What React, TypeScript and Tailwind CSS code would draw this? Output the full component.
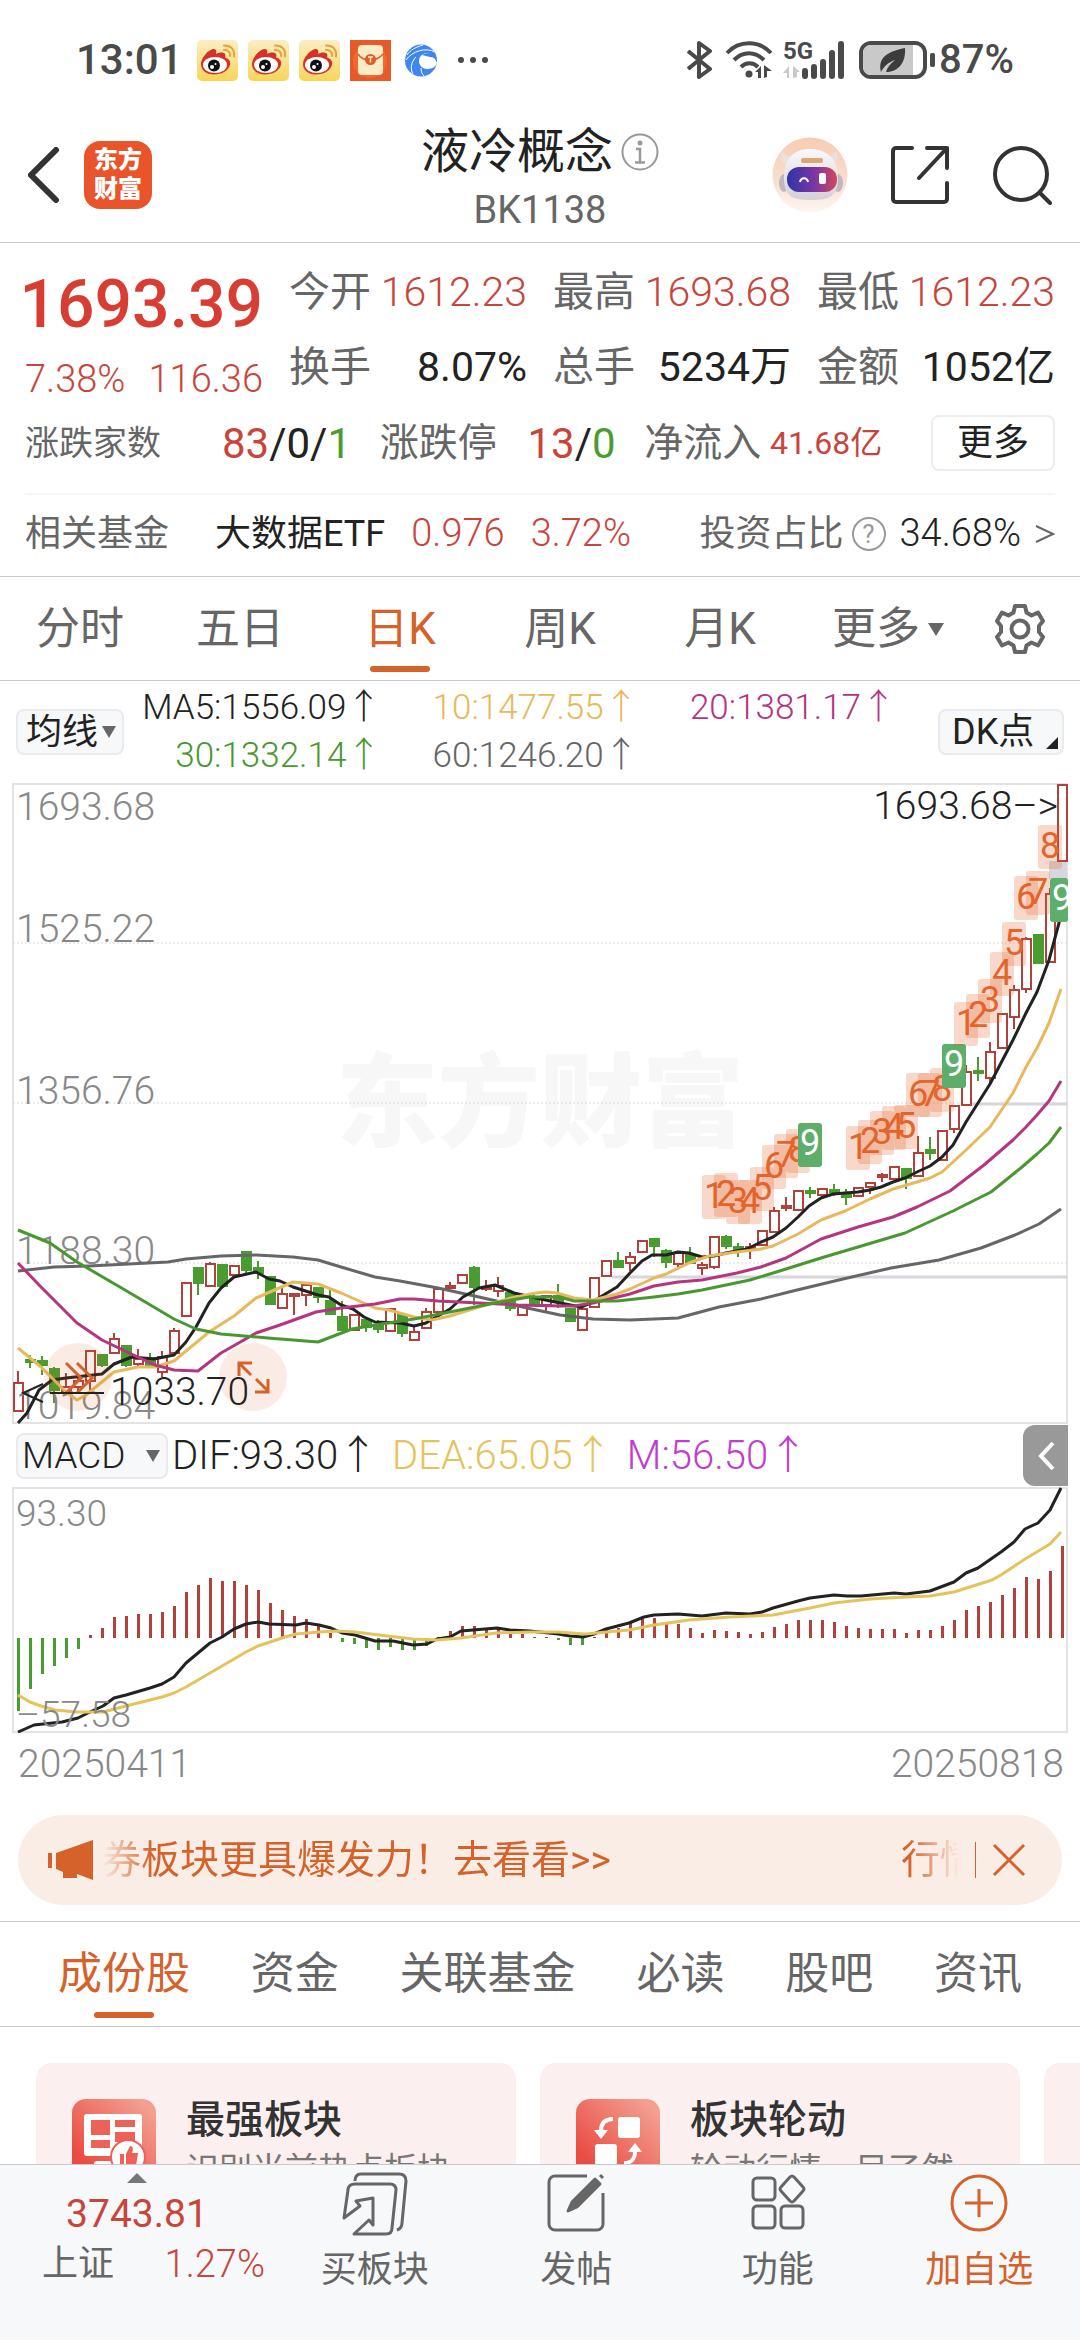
import React, { useState } from 'react';
import type { FC } from 'react';

interface Candle {
  up: boolean;
  high: number;
  top: number;
  bottom: number;
  low: number;
}

interface Marker {
  index: number;
  y: number;
  n: number;
}

const STEP = 12;
const candleX = (i: number) => 18 + i * STEP;

// [up, high, body top, body bottom, low], chart units measured from the top of the plot
const rawCandles: [number, number, number, number, number][] = [
  [1, 588, 600, 628, 628], [0, 572, 577, 579, 585], [0, 573, 578, 582, 592], [0, 584, 586, 607, 620],
  [1, 590, 604, 609, 612], [1, 594, 598, 604, 610], [1, 567, 568, 598, 609], [0, 571, 572, 582, 584],
  [1, 550, 556, 570, 570], [0, 562, 563, 582, 584], [1, 566, 576, 581, 585], [0, 570, 575, 584, 584],
  [1, 568, 574, 589, 594], [1, 545, 548, 570, 572], [1, 500, 500, 533, 533], [0, 484, 485, 500, 512],
  [1, 479, 481, 503, 504], [0, 481, 482, 503, 503], [1, 483, 483, 492, 494], [0, 468, 469, 487, 490],
  [0, 478, 485, 490, 496], [0, 494, 494, 521, 521], [1, 504, 511, 525, 525], [1, 511, 511, 512, 532],
  [1, 500, 502, 512, 523], [0, 505, 505, 514, 520], [0, 507, 518, 531, 531], [0, 518, 534, 547, 547],
  [1, 532, 532, 547, 547], [0, 534, 537, 544, 549], [0, 537, 543, 546, 550], [1, 526, 526, 548, 548],
  [0, 531, 532, 550, 554], [1, 544, 549, 557, 557], [1, 525, 529, 545, 545], [1, 504, 506, 529, 529],
  [1, 499, 503, 505, 506], [1, 492, 492, 500, 500], [0, 483, 485, 504, 522], [1, 497, 504, 506, 508],
  [1, 494, 503, 508, 514], [0, 509, 510, 525, 528], [1, 522, 522, 532, 532], [0, 512, 514, 521, 521],
  [1, 512, 513, 522, 528], [0, 501, 513, 519, 525], [0, 525, 526, 538, 539], [1, 524, 526, 547, 547],
  [1, 495, 495, 524, 524], [1, 478, 478, 493, 493], [0, 469, 478, 484, 484], [1, 469, 474, 480, 488],
  [1, 458, 458, 469, 469], [0, 455, 456, 463, 474], [0, 466, 468, 479, 485], [1, 468, 470, 481, 484],
  [0, 464, 472, 480, 480], [1, 479, 482, 485, 492], [1, 454, 454, 484, 486], [0, 452, 454, 463, 466],
  [0, 460, 464, 465, 474], [1, 460, 464, 466, 476], [1, 448, 448, 462, 462], [1, 424, 428, 449, 449],
  [1, 414, 423, 424, 428], [1, 408, 408, 427, 427], [0, 404, 408, 410, 415], [1, 405, 406, 412, 416],
  [0, 401, 407, 409, 413], [0, 406, 412, 414, 422], [1, 405, 405, 413, 413], [1, 399, 400, 404, 411],
  [1, 390, 392, 394, 399], [1, 383, 384, 396, 397], [0, 386, 386, 395, 406], [1, 353, 370, 393, 393],
  [0, 354, 367, 370, 377], [1, 348, 348, 377, 377], [1, 322, 323, 346, 350], [1, 282, 289, 322, 322],
  [0, 274, 288, 289, 298], [1, 259, 269, 295, 300], [1, 231, 231, 265, 265], [1, 202, 207, 234, 246],
  [1, 154, 156, 206, 210], [0, 151, 152, 180, 180], [1, 105, 111, 179, 179], [1, 2, 2, 78, 78],
];

const candles: Candle[] = rawCandles.map(([up, high, top, bottom, low]) => ({
  up: up === 1,
  high,
  top,
  bottom,
  low,
}));

const averages = [
  {
    id: 'ma60',
    color: '#666666',
    points:
      '18,488 54,484 89,483 168,479 186,476 221,473 256,472 293,474 318,477 341,484 375,494 400,498 438,505 479,514 518,523 560,532 568,533 593,536 630,537 678,535 719,524 761,516 797,507 843,496 891,485 939,477 981,465 1015,452 1039,441 1061,426',
  },
  {
    id: 'ma5',
    color: '#222222',
    points:
      '18,640 27,630 39,607 52,597 66,595 102,591 114,581 132,574 154,576 174,572 186,559 196,544 209,520 221,505 234,494 256,489 269,496 280,498 293,504 318,512 329,514 341,522 353,526 364,534 375,539 400,540 414,543 426,540 438,533 450,526 463,514 479,505 495,502 514,510 536,515 560,520 581,524 593,519 602,513 617,504 630,490 642,478 652,472 666,472 678,469 689,470 702,474 714,473 726,470 747,466 761,459 773,454 786,445 798,434 809,423 821,415 833,411 845,410 858,409 870,407 881,404 893,399 905,395 917,389 930,383 942,374 953,362 966,339 978,320 990,301 1013,257 1026,230 1037,209 1049,177 1059,140 1061,130',
  },
  {
    id: 'ma10',
    color: '#e8b95c',
    points:
      '18,565 41,584 66,609 77,617 86,612 114,589 138,584 155,584 174,578 209,549 234,533 256,515 293,499 318,501 341,510 375,525 389,527 414,534 432,537 450,533 479,524 511,515 536,510 546,509 557,510 574,515 593,517 617,511 630,506 654,495 666,491 689,480 709,473 737,469 761,466 773,463 798,451 821,437 845,428 870,416 893,406 917,399 930,395 942,389 953,379 966,367 990,344 1013,310 1026,284 1037,265 1049,240 1061,206',
  },
  {
    id: 'ma20',
    color: '#b5357f',
    points:
      '18,480 41,504 77,540 102,557 125,568 155,582 174,587 198,588 221,570 256,550 280,542 316,529 341,525 375,521 400,516 414,516 438,518 479,520 518,522 560,523 574,523 593,520 630,511 654,503 678,499 702,497 737,490 761,484 786,475 821,456 858,444 893,434 917,424 950,408 984,382 1013,357 1026,344 1037,332 1049,318 1061,298',
  },
  {
    id: 'ma30',
    color: '#48982f',
    points:
      '18,447 50,460 77,479 125,507 174,536 196,546 221,551 268,555 318,559 352,546 375,542 414,536 450,529 500,519 529,514 560,514 574,518 617,518 654,514 678,511 702,507 750,497 786,486 821,475 858,464 905,450 953,428 991,409 1022,384 1037,371 1049,360 1061,344',
  },
];

// nine-count sequences, each one starts at the given candle
const sequences = [
  { start: 58, tops: [392, 390, 397, 397, 384, 362, 351, 346, 340] },
  { start: 70, tops: [343, 337, 328, 323, 322, 290, 290, 285, 261] },
  { start: 79, tops: [219, 211, 196, 169, 139, 93, 88, 42, 95] },
];

const markers: Marker[] = sequences.flatMap(({ start, tops }) =>
  tops.map((y, i) => ({ index: start + i, y, n: i + 1 })),
);

const priceLabels = [
  { value: '1693.68', y: 37 },
  { value: '1525.22', y: 159 },
  { value: '1356.76', y: 321 },
  { value: '1188.30', y: 481 },
  { value: '1019.84', y: 636 },
];

const macdBars: number[] = [
  -73, -51, -36, -28, -20, -11, 3, 10, 21, 22, 24, 24, 26, 32, 46, 53, 60, 57, 57, 53, 48, 35, 28, 22, 19, 13, 5, -4, -6,
  -10, -12, -9, -12, -12, -8, 1, 7, 12, 12, 10, 11, 6, 4, 1, 1, -2, -7, -7, 1, 8, 10, 15, 19, 20, 15, 14, 10, 5, 8, 7, 6,
  4, 6, 11, 14, 18, 18, 18, 16, 12, 10, 9, 9, 9, 5, 8, 8, 12, 18, 28, 32, 36, 43, 50, 61, 59, 67, 92,
];

const difLine =
  '18,245 34,238 62,235 78,231 90,225 103,219 114,211 126,208 150,201 162,197 174,190 186,176 210,156 222,150 234,142 246,137 258,135 269,137 296,138 306,136 319,138 331,141 342,146 355,148 375,154 393,154 413,158 427,157 437,152 450,150 461,144 497,141 510,143 530,144 558,147 570,149 583,150 594,147 606,142 629,136 644,130 654,128 678,127 702,129 726,126 750,127 762,125 773,121 798,114 810,111 834,108 847,109 861,109 894,106 906,107 930,104 954,95 966,86 978,81 1001,65 1014,55 1025,42 1038,36 1050,23 1061,1';
const deaLine =
  '18,208 30,215 41,219 55,223 76,225 103,225 126,219 162,210 174,206 186,200 222,179 246,165 258,159 282,151 296,147 319,145 337,144 355,145 379,148 413,152 437,153 461,151 496,146 530,145 558,145 585,147 629,143 654,138 689,133 730,130 773,128 810,121 834,116 870,112 906,110 930,109 954,105 992,93 1001,88 1025,72 1050,57 1061,45';

const WeiboIcon: FC = () => (
  <svg viewBox="0 0 41 41" className="h-[41px] w-[41px]">
    <defs>
      <linearGradient id="weiboBg" x1="0" y1="0" x2="0" y2="1">
        <stop offset="0" stopColor="#fbeec4" />
        <stop offset="1" stopColor="#f8d557" />
      </linearGradient>
    </defs>
    <rect width="41" height="41" rx="5" fill="url(#weiboBg)" />
    <path
      d="M4 24c0-6 7-14 12-15 3-.6 4 2 3 5 3-2 8-2 9 0 .7 1.200.3 2.500 0 3.500 3 1 6 3 5 7-1 6-8 10-16 10S4 30 4 24Z"
      fill="#d5302a"
    />
    <ellipse cx="18" cy="25" rx="12" ry="8" fill="#fff" />
    <circle cx="17" cy="25.500" r="6" fill="#111" />
    <circle cx="15" cy="27" r="2" fill="#fff" />
    <circle cx="18.500" cy="24" r="1" fill="#fff" />
    <path d="M27 10c4-.5 6.500 2.500 6 6M27 5.500c7-.5 11 4.500 10 11" fill="none" stroke="#e5a33d" strokeWidth="2" strokeLinecap="round" />
  </svg>
);

const StatusBar: FC = () => (
  <div className="flex h-[108px] items-center justify-between pt-3 pl-[76px] pr-[66px] text-[#4a4a4a]">
    <div className="flex items-center gap-[10px]">
      <span className="mr-1 text-[42px] leading-none font-medium">13:01</span>
      <WeiboIcon />
      <WeiboIcon />
      <WeiboIcon />
      <svg viewBox="0 0 41 41" className="h-[41px] w-[41px]">
        <rect width="41" height="41" fill="#e5592b" />
        <circle cx="20" cy="21" r="17" fill="#ee6a2c" />
        <rect x="8" y="5" width="25" height="30" rx="4" fill="#fdebc8" />
        <path d="M8 14c3 5 8 6 12 6s9-1 13-6" fill="none" stroke="#d5602c" strokeWidth="1.500" />
        <circle cx="20.500" cy="19.500" r="5.500" fill="#dd5a2b" />
        <path d="M18 17h5M20.500 17v5.500" stroke="#fdebc8" strokeWidth="1.500" />
      </svg>
      <svg viewBox="0 0 41 41" className="h-[41px] w-[41px]">
        <circle cx="20" cy="20.500" r="16" fill="#3f86f0" />
        <path d="M27 13c-6 0-9 4-9 8s3 8 8 8c6 0 9-3 10-6l-2-4Z" fill="#fff" />
        <path d="M21 15c5-3 11-2 15 3l-7-1Z" fill="#3f86f0" />
        <path
          d="M34 12C25 7 11 11 5 20M22 5C15 7 9 10 6 15M15 17C10 22 9 29 12 34M20 28c0 4 1 6 3 8"
          fill="none"
          stroke="#fff"
          strokeWidth="1"
        />
      </svg>
      <svg viewBox="0 0 30 8" className="ml-[6px] h-2 w-[30px]" fill="currentColor">
        <circle cx="3" cy="4" r="3" />
        <circle cx="15" cy="4" r="3" />
        <circle cx="27" cy="4" r="3" />
      </svg>
    </div>
    <div className="flex items-center">
      <svg viewBox="0 0 26 38" className="h-[38px] w-[26px]" fill="none" stroke="currentColor" strokeWidth="4" strokeLinejoin="round">
        <path d="M1 10l22 18-11 8V2l11 8L1 28" />
      </svg>
      <svg viewBox="0 0 48 38" className="ml-3 h-[38px] w-12" fill="none" stroke="currentColor" strokeWidth="4">
        <path d="M2 12c12-13 32-13 44 0M9 19c9-9 21-9 30 0M16 26c5-5 12-5 17 0" />
        <circle cx="24" cy="33" r="3.500" fill="currentColor" stroke="none" />
        <path d="M30 31l6-6v12h-3v-6ZM39 24l8 6-5 0v6l-3 1Z" fill="currentColor" stroke="none" />
      </svg>
      <div className="relative ml-[10px] h-[38px] w-[62px]">
        <span className="absolute top-0 left-0 text-[24px] leading-[20px] font-bold">5G</span>
        <svg viewBox="0 0 62 38" className="h-[38px] w-[62px]" stroke="currentColor" strokeWidth="6" strokeLinecap="round">
          <path d="M22 30v5M31 26v9M40 21v14M49 12v23M58 3v32" />
          <path d="M0 32l6-7v12H4v-5ZM10 25l7 6-3 0v5l-4 1Z" fill="#c9c9c9" stroke="none" />
        </svg>
      </div>
      <svg viewBox="0 0 80 38" className="ml-[14px] h-[38px] w-20">
        <rect x="2" y="2" width="64" height="34" rx="10" fill="#fff" stroke="#4a4a4a" strokeWidth="4" />
        <path d="M54 4H12a8 8 0 0 0-8 8v14a8 8 0 0 0 8 8h42Z" fill="#c9c9c9" />
        <path d="M22 31c-3-12 3-20 24-24 1 14-6 24-19 24 1-4 4-8 9-12-6 2-11 6-14 12Z" fill="#3c3c3c" />
        <rect x="71" y="12" width="5" height="14" rx="2" fill="#4a4a4a" />
      </svg>
      <span className="text-[40px] leading-none font-medium">87%</span>
    </div>
  </div>
);

const Header: FC = () => (
  <header className="grid h-[135px] grid-cols-[1fr_auto_1fr] items-center border-b border-[#c9c9c9] px-7">
    <div className="flex items-center gap-5">
      <button aria-label="返回">
        <svg viewBox="0 0 36 56" className="h-14 w-9" fill="none" stroke="#333" strokeWidth="6" strokeLinecap="round">
          <path d="M28 3L3 28l25 25" />
        </svg>
      </button>
      <a
        href="#home"
        className="flex h-[68px] w-[68px] items-center justify-center rounded-2xl bg-[#e9542a] text-center text-[24px] leading-[29px] font-black text-white"
      >
        东方
        <br />
        财富
      </a>
    </div>
    <div className="flex flex-col items-center pt-3">
      <div className="flex h-[58px] items-center gap-2">
        <h1 className="text-[48px] leading-none font-normal text-[#222]">液冷概念</h1>
        <button aria-label="说明">
          <svg viewBox="0 0 38 38" className="h-[38px] w-[38px]" fill="none" stroke="#999" strokeWidth="2">
            <circle cx="19" cy="19" r="17.500" />
            <path d="M15 16h4v13M14 29.500h10" strokeWidth="2.500" />
            <circle cx="19" cy="10" r="2.500" fill="#999" stroke="none" />
          </svg>
        </button>
      </div>
      <div className="flex h-[58px] items-center text-[38px] text-[#666]">BK1138</div>
    </div>
    <div className="flex items-center justify-end">
      <button aria-label="智能助手">
        <svg viewBox="0 0 76 78" className="h-[78px] w-[76px]">
          <defs>
            <linearGradient id="botBg" x1="0" y1="0" x2="0" y2="1">
              <stop offset="0" stopColor="#f7cbb2" />
              <stop offset="0.600" stopColor="#fadfd0" />
              <stop offset="1" stopColor="#fef7f3" />
            </linearGradient>
            <linearGradient id="botHead" x1="0" y1="0" x2="0" y2="1">
              <stop offset="0" stopColor="#faf8f8" />
              <stop offset="1" stopColor="#d5d0d6" />
            </linearGradient>
            <linearGradient id="botFace" x1="0" y1="0" x2="1" y2="0">
              <stop offset="0" stopColor="#2f35a8" />
              <stop offset="0.550" stopColor="#7b35a5" />
              <stop offset="1" stopColor="#d2485c" />
            </linearGradient>
          </defs>
          <circle cx="38" cy="39" r="37.500" fill="url(#botBg)" />
          <path d="M16 30c-7-3-9-9-6-15 2 5 6 6 12 6ZM58 30c7-3 9-9 6-15-2 5-6 6-12 6Z" fill="#e9e0df" />
          <ellipse cx="12" cy="47" rx="5" ry="9" fill="#bfb8be" />
          <ellipse cx="66" cy="47" rx="5" ry="9" fill="#bfb8be" />
          <path d="M12 42c0-19 9-29 26-29s28 10 28 29-9 22-27 22-27-3-27-22Z" fill="url(#botHead)" />
          <rect x="29" y="22" width="22" height="5" rx="2" fill="#d9a878" />
          <rect x="15" y="31" width="50" height="25" rx="12" fill="url(#botFace)" />
          <path d="M28 46c1-5 7-5 8 0" fill="none" stroke="#fff" strokeWidth="2" />
          <rect x="47" y="37" width="7" height="11" rx="2" fill="#fff" />
        </svg>
      </button>
      <button aria-label="分享" className="ml-[42px]">
        <svg viewBox="0 0 60 60" className="h-[60px] w-[60px]" fill="none" stroke="#333" strokeWidth="4" strokeLinecap="round" strokeLinejoin="round">
          <path d="M22 3H6a3 3 0 0 0-3 3v48a3 3 0 0 0 3 3h48a3 3 0 0 0 3-3V38M37 3h20v20M57 3L29 33" />
        </svg>
      </button>
      <button aria-label="搜索" className="ml-[42px]">
        <svg viewBox="0 0 60 60" className="h-[60px] w-[60px]" fill="none" stroke="#333" strokeWidth="4" strokeLinecap="round">
          <circle cx="29" cy="29" r="26" />
          <path d="M48 48l10 10" />
        </svg>
      </button>
    </div>
  </header>
);

const quoteColumns = [
  {
    first: { label: '今开', value: '1612.23' },
    second: { label: '换手', value: '8.07%' },
  },
  {
    first: { label: '最高', value: '1693.68' },
    second: { label: '总手', value: '5234万' },
  },
  {
    first: { label: '最低', value: '1612.23' },
    second: { label: '金额', value: '1052亿' },
  },
];

const Quote: FC = () => (
  <section className="border-b border-[#c9c9c9] px-[25px] pt-3 text-[#666]">
    <div className="grid h-[150px] grid-cols-4 gap-x-[26px]">
      <div className="pt-3 text-[#c8453b]">
        <div className="flex h-[75px] items-center justify-end text-[66px] leading-none font-medium text-[#d83d33]">1693.39</div>
        <div className="flex h-[75px] items-center justify-between text-[38px] font-light">
          <span>7.38%</span>
          <span>116.36</span>
        </div>
      </div>
      {quoteColumns.map(({ first, second }) => (
        <dl key={first.label} className="text-[41px]">
          <div className="flex h-[75px] items-center justify-between">
            <dt>{first.label}</dt>
            <dd className="font-light text-[#c8453b]">{first.value}</dd>
          </div>
          <div className="flex h-[75px] items-center justify-between">
            <dt>{second.label}</dt>
            <dd className="text-[#222]">{second.value}</dd>
          </div>
        </dl>
      ))}
    </div>
    <div className="flex h-[76px] items-center justify-between">
      <div className="flex w-[326px] items-center justify-between">
        <span className="text-[34px]">涨跌家数</span>
        <span className="text-[42px] text-[#222]">
          <span className="text-[#c8453b]">83</span>/0/<span className="text-[#489c30]">1</span>
        </span>
      </div>
      <div className="flex w-[236px] items-center justify-between">
        <span className="text-[39px]">涨跌停</span>
        <span className="text-[42px] text-[#222]">
          <span className="text-[#c8453b]">13</span>/<span className="text-[#489c30]">0</span>
        </span>
      </div>
      <div className="flex w-[238px] items-center justify-between">
        <span className="text-[39px]">净流入</span>
        <span className="text-[32px] text-[#c8453b]">41.68亿</span>
      </div>
      <button className="ml-5 flex h-14 w-[124px] items-center justify-center rounded-lg border-2 border-[#ededed] text-[36px] leading-none text-[#222]">
        更多
      </button>
    </div>
    <div className="mt-3 flex h-[83px] items-center border-t-2 border-[#f5f6f7] pb-1 text-[36px]">
      <span>相关基金</span>
      <a href="#etf" className="ml-[46px] text-[#222]">
        大数据ETF
      </a>
      <span className="ml-[26px] text-[38px] font-light text-[#c8453b]">0.976</span>
      <span className="ml-[26px] text-[38px] font-light text-[#c8453b]">3.72%</span>
      <span className="ml-auto">投资占比</span>
      <span className="ml-2 flex h-[34px] w-[34px] items-center justify-center rounded-full border-2 border-[#999] text-[26px] leading-none text-[#999]">
        ?
      </span>
      <span className="ml-[14px] text-[38px] font-light text-[#222]">34.68%</span>
      <svg viewBox="0 0 20 20" className="ml-[14px] h-5 w-5" fill="none" stroke="#666" strokeWidth="2">
        <path d="M1 2l17 8L1 18" />
      </svg>
    </div>
  </section>
);

const periods = ['分时', '五日', '日K', '周K', '月K'];

const PeriodTabs: FC = () => {
  const [active, setActive] = useState<string>('日K');

  return (
    <nav className="flex h-[104px] items-stretch border-b border-[#c9c9c9] text-[44px] text-[#666]">
      {periods.map((period) => (
        <button
          key={period}
          onClick={() => setActive(period)}
          className={active === period ? 'relative flex-[4] text-[#d5622b]' : 'relative flex-[4]'}
        >
          {period}
          {active === period && <span className="absolute bottom-2 left-1/2 h-[6px] w-[60px] -translate-x-1/2 rounded-full bg-[#d5622b]" />}
        </button>
      ))}
      <button className="flex flex-[4] items-center justify-center gap-2">
        <span className="ml-4">更多</span>
        <svg viewBox="0 0 16 14" className="h-[14px] w-4" fill="currentColor">
          <path d="M0 1h16L8 14Z" />
        </svg>
      </button>
      <button aria-label="设置" className="flex flex-[3] items-center justify-center">
        <svg viewBox="0 0 52 52" className="h-[52px] w-[52px]" fill="none" stroke="currentColor" strokeWidth="4" strokeLinejoin="round">
          <path d="M21 3h10l1.500 6.500 5 3L44 9.500 49 18l-4 5v6l4 5-5 8.500-6.500-3-5 3L31 49H21l-1.500-6.500-5-3L8 42.500 3 34l4-5v-6l-4-5 5-8.500 6.500 3 5-3Z" />
          <circle cx="26" cy="26" r="8.500" />
        </svg>
      </button>
    </nav>
  );
};

const legend = [
  { text: 'MA5:1556.09↑', className: 'text-[#222]' },
  { text: '10:1477.55↑', className: 'text-[#e8b95c]' },
  { text: '20:1381.17↑', className: 'text-[#b5357f]' },
  { text: '30:1332.14↑', className: 'text-[#48982f]' },
  { text: '60:1246.20↑', className: 'text-[#666]' },
];

const Caret: FC = () => (
  <svg viewBox="0 0 14 12" className="pointer-events-none absolute top-1/2 right-2 h-3 w-[14px] -translate-y-1/2" fill="#666">
    <path d="M0 0h14L7 12Z" />
  </svg>
);

const Legend: FC = () => (
  <div className="flex h-[102px] items-center px-4">
    <label className="relative block w-[108px]">
      <select
        aria-label="主图指标"
        className="block h-[46px] w-full appearance-none rounded-lg border-2 border-[#e8eaed] bg-[#f7f8fa] pl-2 text-[36px] leading-none text-[#222]"
      >
        <option>均线</option>
      </select>
      <Caret />
    </label>
    <div className="mr-[42px] grid flex-1 grid-cols-3 text-right text-[35px] leading-[48px] font-light">
      {legend.map((item) => (
        <span key={item.text} className={item.className}>
          {item.text}
        </span>
      ))}
    </div>
    <button className="relative flex h-[46px] w-[126px] items-center rounded-lg border-2 border-[#e8eaed] bg-[#f7f8fa] pl-3 text-[36px] leading-none text-[#222]">
      DK点
      <svg viewBox="0 0 12 12" className="absolute right-1 bottom-1 h-3 w-3" fill="#222">
        <path d="M12 0v12H0Z" />
      </svg>
    </button>
  </div>
);

const PriceChart: FC = () => (
  <svg viewBox="0 0 1080 641" className="block w-full font-light" role="img" aria-label="日K线图">
    <text x="540" y="356" textAnchor="middle" fontSize="102" fontWeight="900" fill="#f7f7f7">
      东方财富
    </text>
    <g stroke="#d9d9d9" strokeWidth="1" strokeDasharray="2 2">
      <path d="M13 160h1054M13 320h1054M13 480h1054" />
    </g>
    <rect x="13" y="1" width="1054" height="639" fill="none" stroke="#e3e3e3" strokeWidth="2" />
    <path d="M612 494h455M968 321h99" stroke="#d6d6dc" strokeWidth="3" />
    <rect x="1049" y="78" width="18" height="18" fill="#d6d6dc" />

    {candles.map((c, i) => {
      const x = candleX(i);
      const color = c.up ? '#b0413b' : '#489c30';
      const height = Math.max(c.bottom - c.top, 2);
      return (
        <g key={i} stroke={color} strokeWidth="2">
          {c.high < c.top && <path d={`M${x} ${c.high}V${c.top}`} />}
          {c.low > c.bottom && <path d={`M${x} ${c.bottom}V${c.low}`} />}
          <rect x={x - 4} y={c.top} width="9" height={height} fill={c.up ? '#fff' : color} />
        </g>
      );
    })}

    {priceLabels.map((label) => (
      <text key={label.value} x="16" y={label.y} fontSize="39" fill="#888">
        {label.value}
      </text>
    ))}

    {averages.map((line) => (
      <polyline key={line.id} points={line.points} fill="none" stroke={line.color} strokeWidth="3" strokeLinejoin="round" />
    ))}

    {markers.map((m) => {
      const x = candleX(m.index);
      if (m.n === 9) {
        return (
          <g key={m.index + '-' + m.n}>
            <rect x={x - 12} y={m.y} width={Math.min(24, 1068 - x + 12)} height="44" rx="3" fill="#5dae6b" />
            <text x={x} y={m.y + 32} textAnchor="middle" fontSize="36" fontWeight="400" fill="#fff">
              9
            </text>
          </g>
        );
      }
      return (
        <g key={m.index + '-' + m.n} fill="#e2652c">
          <rect x={x - 12} y={m.y} width="24" height="44" rx="3" fillOpacity="0.250" />
          <text x={x} y={m.y + 33} textAnchor="middle" fontSize="36" fontWeight="400">
            {m.n}
          </text>
        </g>
      );
    })}

    <text x="1058" y="36" textAnchor="end" fontSize="39" fill="#222">
      1693.68–&gt;
    </text>

    <circle cx="78" cy="594" r="34" fill="#d5622b" fillOpacity="0.120" />
    <circle cx="253" cy="594" r="34" fill="#d5622b" fillOpacity="0.120" />
    <g fill="none" stroke="#d5622b" strokeWidth="3">
      <path d="M66 580l15 15-15 15M77 580l15 15-15 15" />
      <path d="M251 592l-12-12M239 593v-13h13M256 596l12 12M268 596v13h-13" />
    </g>
    <path d="M43 601l-20 9 20 9M50 610h25M75 610h29" fill="none" stroke="#222" strokeWidth="2" />
    <text x="110" y="622" fontSize="39" fill="#222">
      1033.70
    </text>
  </svg>
);

const MacdPanel: FC = () => (
  <>
    <div className="flex h-[63px] items-center pl-4">
      <label className="relative block w-[152px]">
        <select
          aria-label="副图指标"
          className="block h-[46px] w-full appearance-none rounded-lg border-2 border-[#e8eaed] bg-[#f7f8fa] pl-1 text-[37px] leading-none font-light text-[#222]"
        >
          <option>MACD</option>
        </select>
        <Caret />
      </label>
      <div className="ml-1 flex gap-[14px] text-[40px] leading-none font-light">
        <span className="text-[#222]">DIF:93.30↑</span>
        <span className="text-[#e5c35c]">DEA:65.05↑</span>
        <span className="text-[#bf3dd0]">M:56.50↑</span>
      </div>
      <button aria-label="展开" className="mr-3 ml-auto flex h-[61px] w-[45px] items-center justify-center rounded-l-xl bg-[#999]">
        <svg viewBox="0 0 18 30" className="h-[30px] w-[18px]" fill="none" stroke="#fff" strokeWidth="4">
          <path d="M16 2L4 15l12 13" />
        </svg>
      </button>
    </div>
    <svg viewBox="0 0 1080 246" className="block w-full font-light" role="img" aria-label="MACD">
      <rect x="13" y="1" width="1054" height="244" fill="none" stroke="#e3e3e3" strokeWidth="2" />
      {macdBars.map((value, i) => (
        <rect
          key={i}
          x={candleX(i) - 1}
          y={value > 0 ? 151 - value : 151}
          width="3"
          height={Math.abs(value)}
          fill={value > 0 ? '#b0413b' : '#489c30'}
        />
      ))}
      <polyline points={difLine} fill="none" stroke="#222" strokeWidth="3" strokeLinejoin="round" />
      <polyline points={deaLine} fill="none" stroke="#e5c35c" strokeWidth="3" strokeLinejoin="round" />
      <g fontSize="37" fill="#888">
        <text x="16" y="39">
          93.30
        </text>
        <text x="16" y="240">
          –57.58
        </text>
      </g>
    </svg>
    <div className="flex h-[62px] items-center justify-between pr-4 pl-[18px] text-[39px] font-light text-[#888]">
      <span>20250411</span>
      <span>20250818</span>
    </div>
  </>
);

const Banner: FC = () => (
  <div className="mx-[18px] mt-5 flex h-[90px] items-center rounded-full bg-[#faede5] pr-9 pl-[30px] text-[#d5622b]">
    <svg viewBox="0 0 46 40" className="h-10 w-[46px]" fill="currentColor">
      <path d="M0 13h4v15H0ZM8 13L45 0v40l-16-6v4H15v-6l-7-3Z" />
    </svg>
    <a
      href="#sector"
      className="ml-2 flex flex-1 justify-between overflow-hidden text-[39px] whitespace-nowrap [mask-image:linear-gradient(90deg,transparent,#000_50px,#000_calc(100%-50px),transparent)]"
    >
      <span>券板块更具爆发力！去看看&gt;&gt;</span>
      <span className="-mr-5">行情</span>
    </a>
    <span className="ml-4 h-9 w-px bg-[#d5622b]" />
    <button aria-label="关闭" className="ml-4">
      <svg viewBox="0 0 34 34" className="h-[34px] w-[34px]" fill="none" stroke="currentColor" strokeWidth="3">
        <path d="M2 2l30 30M32 2L2 32" />
      </svg>
    </button>
  </div>
);

const sections = ['成份股', '资金', '关联基金', '必读', '股吧', '资讯'];

const SectionTabs: FC = () => {
  const [active, setActive] = useState<string>('成份股');

  return (
    <nav className="mt-4 flex h-[106px] justify-between border-y border-[#c9c9c9] px-[58px] text-[44px] text-[#666]">
      {sections.map((section) => (
        <button key={section} onClick={() => setActive(section)} className={active === section ? 'relative text-[#d5622b]' : 'relative'}>
          {section}
          {active === section && <span className="absolute bottom-2 left-1/2 h-[6px] w-[60px] -translate-x-1/2 rounded-full bg-[#d5622b]" />}
        </button>
      ))}
    </nav>
  );
};

const StrongIcon: FC = () => (
  <svg viewBox="0 0 84 84" className="h-[84px] w-[84px] shrink-0">
    <defs>
      <linearGradient id="cardIcon" x1="0" y1="1" x2="1" y2="0">
        <stop offset="0.200" stopColor="#ea4c43" />
        <stop offset="0.900" stopColor="#f3a090" />
      </linearGradient>
    </defs>
    <rect width="84" height="84" rx="14" fill="url(#cardIcon)" />
    <rect x="12" y="15" width="58" height="42" rx="3" fill="#fff" />
    <path d="M19 21h19v15H19ZM43 21h20v7H43ZM43 33h20v10H43ZM19 41h19v8H19Z" fill="#ec6158" />
    <rect x="22" y="62" width="30" height="6" rx="3" fill="#fff" />
    <circle cx="56" cy="58" r="17" fill="#fff" stroke="#ec6158" strokeWidth="2" />
    <path d="M48 55h4v12h-4ZM54 55l4-8c4 0 3 4 2 7h6l-2 13H54Z" fill="#ec6158" />
  </svg>
);

const RotateIcon: FC = () => (
  <svg viewBox="0 0 84 84" className="h-[84px] w-[84px] shrink-0">
    <rect width="84" height="84" rx="14" fill="url(#cardIcon)" />
    <rect x="42" y="18" width="22" height="21" rx="3" fill="#fff" />
    <rect x="19" y="45" width="22" height="21" rx="3" fill="#fff" />
    <path d="M37 20c-8 0-12 4-12 12" fill="none" stroke="#fff" strokeWidth="4" />
    <path d="M18 31h14l-7 9ZM52 53h14l-7-9Z" fill="#fff" />
    <path d="M48 64c8 0 11-4 11-12" fill="none" stroke="#fff" strokeWidth="4" />
  </svg>
);

const cards = [
  { title: '最强板块', text: '识别当前热点板块', icon: <StrongIcon /> },
  { title: '板块轮动', text: '轮动行情一目了然', icon: <RotateIcon /> },
];

const Cards: FC = () => (
  <div className="flex gap-6 overflow-hidden pt-9 pl-9">
    {cards.map((card) => (
      <a key={card.title} href="#card" className="flex h-[156px] w-[480px] shrink-0 items-start gap-[30px] rounded-2xl bg-[#fbf0ef] px-9 pt-9">
        {card.icon}
        <span className="flex flex-col">
          <span className="text-[39px] leading-[42px] font-medium text-[#333]">{card.title}</span>
          <span className="mt-2 text-[33px] leading-[42px] text-[#777]">{card.text}</span>
        </span>
      </a>
    ))}
    <div className="h-[156px] w-[480px] shrink-0 rounded-2xl bg-[#fbf0ef]" />
  </div>
);

const navItems = [
  {
    label: '买板块',
    icon: (
      <>
        <path d="M15 10c0-5 2-7 6-7h38c5 0 7 3 7 7l-4 42c0 4-2 6-5 7" />
        <path d="M4 47l4-28c0-4 3-6 7-6h35c4 0 6 2 6 6l-4 38c0 4-2 6-6 6H14l15-14 4 5V27l-17 3 4 5Z" />
      </>
    ),
  },
  {
    label: '发帖',
    icon: (
      <>
        <path d="M46 5H14a6 6 0 0 0-6 6v42a6 6 0 0 0 6 6h42a6 6 0 0 0 6-6V22" />
        <path d="M27 40l4-9L54 8l5 5-23 23Z" fill="currentColor" />
        <path d="M59 4l3 3" />
      </>
    ),
  },
  {
    label: '功能',
    icon: (
      <>
        <rect x="10" y="7" width="22" height="22" rx="4" />
        <rect x="10" y="35" width="22" height="22" rx="4" />
        <rect x="38" y="35" width="22" height="22" rx="4" />
        <path d="M47 6q2-2 4 0l9 10q2 2 0 4l-9 10q-2 2-4 0l-9-10q-2-2 0-4Z" />
      </>
    ),
  },
  {
    label: '加自选',
    icon: (
      <>
        <circle cx="35" cy="32" r="27" />
        <path d="M21 32h28M35 18v28" />
      </>
    ),
  },
];

const BottomNav: FC = () => (
  <footer className="flex h-[176px] shrink-0 border-t border-[#c9c9c9] bg-[#f7f8fa] text-[#666]">
    <button className="flex w-[274px] flex-col items-center pt-2 text-[#c8453b]">
      <svg viewBox="0 0 20 10" className="h-[10px] w-5" fill="#777">
        <path d="M0 10L10 0l10 10Z" />
      </svg>
      <span className="mt-[6px] text-[39px] leading-[50px]">3743.81</span>
      <span className="flex w-full justify-between pr-[9px] pl-[42px] text-[36px] leading-[50px]">
        <span className="text-[#666]">上证</span>
        <span className="text-[38px] font-light">1.27%</span>
      </span>
    </button>
    {navItems.map((item) => (
      <button
        key={item.label}
        className={item.label === '加自选' ? 'flex flex-1 flex-col items-center pt-[6px] text-[#d5622b]' : 'flex flex-1 flex-col items-center pt-[6px]'}
      >
        <svg viewBox="0 0 70 66" className="h-[66px] w-[70px]" fill="none" stroke="currentColor" strokeWidth="3" strokeLinejoin="round">
          {item.icon}
        </svg>
        <span className="mt-2 text-[36px] leading-[50px]">{item.label}</span>
      </button>
    ))}
  </footer>
);

const App: FC = () => {
  return (
    <div className="flex h-screen flex-col overflow-hidden bg-white font-['Roboto','Noto_Sans_CJK_SC',sans-serif]">
      <StatusBar />
      <Header />
      <main className="min-h-0 flex-1 overflow-hidden">
        <Quote />
        <PeriodTabs />
        <Legend />
        <PriceChart />
        <MacdPanel />
        <Banner />
        <SectionTabs />
        <Cards />
      </main>
      <BottomNav />
    </div>
  );
};

export default App;
